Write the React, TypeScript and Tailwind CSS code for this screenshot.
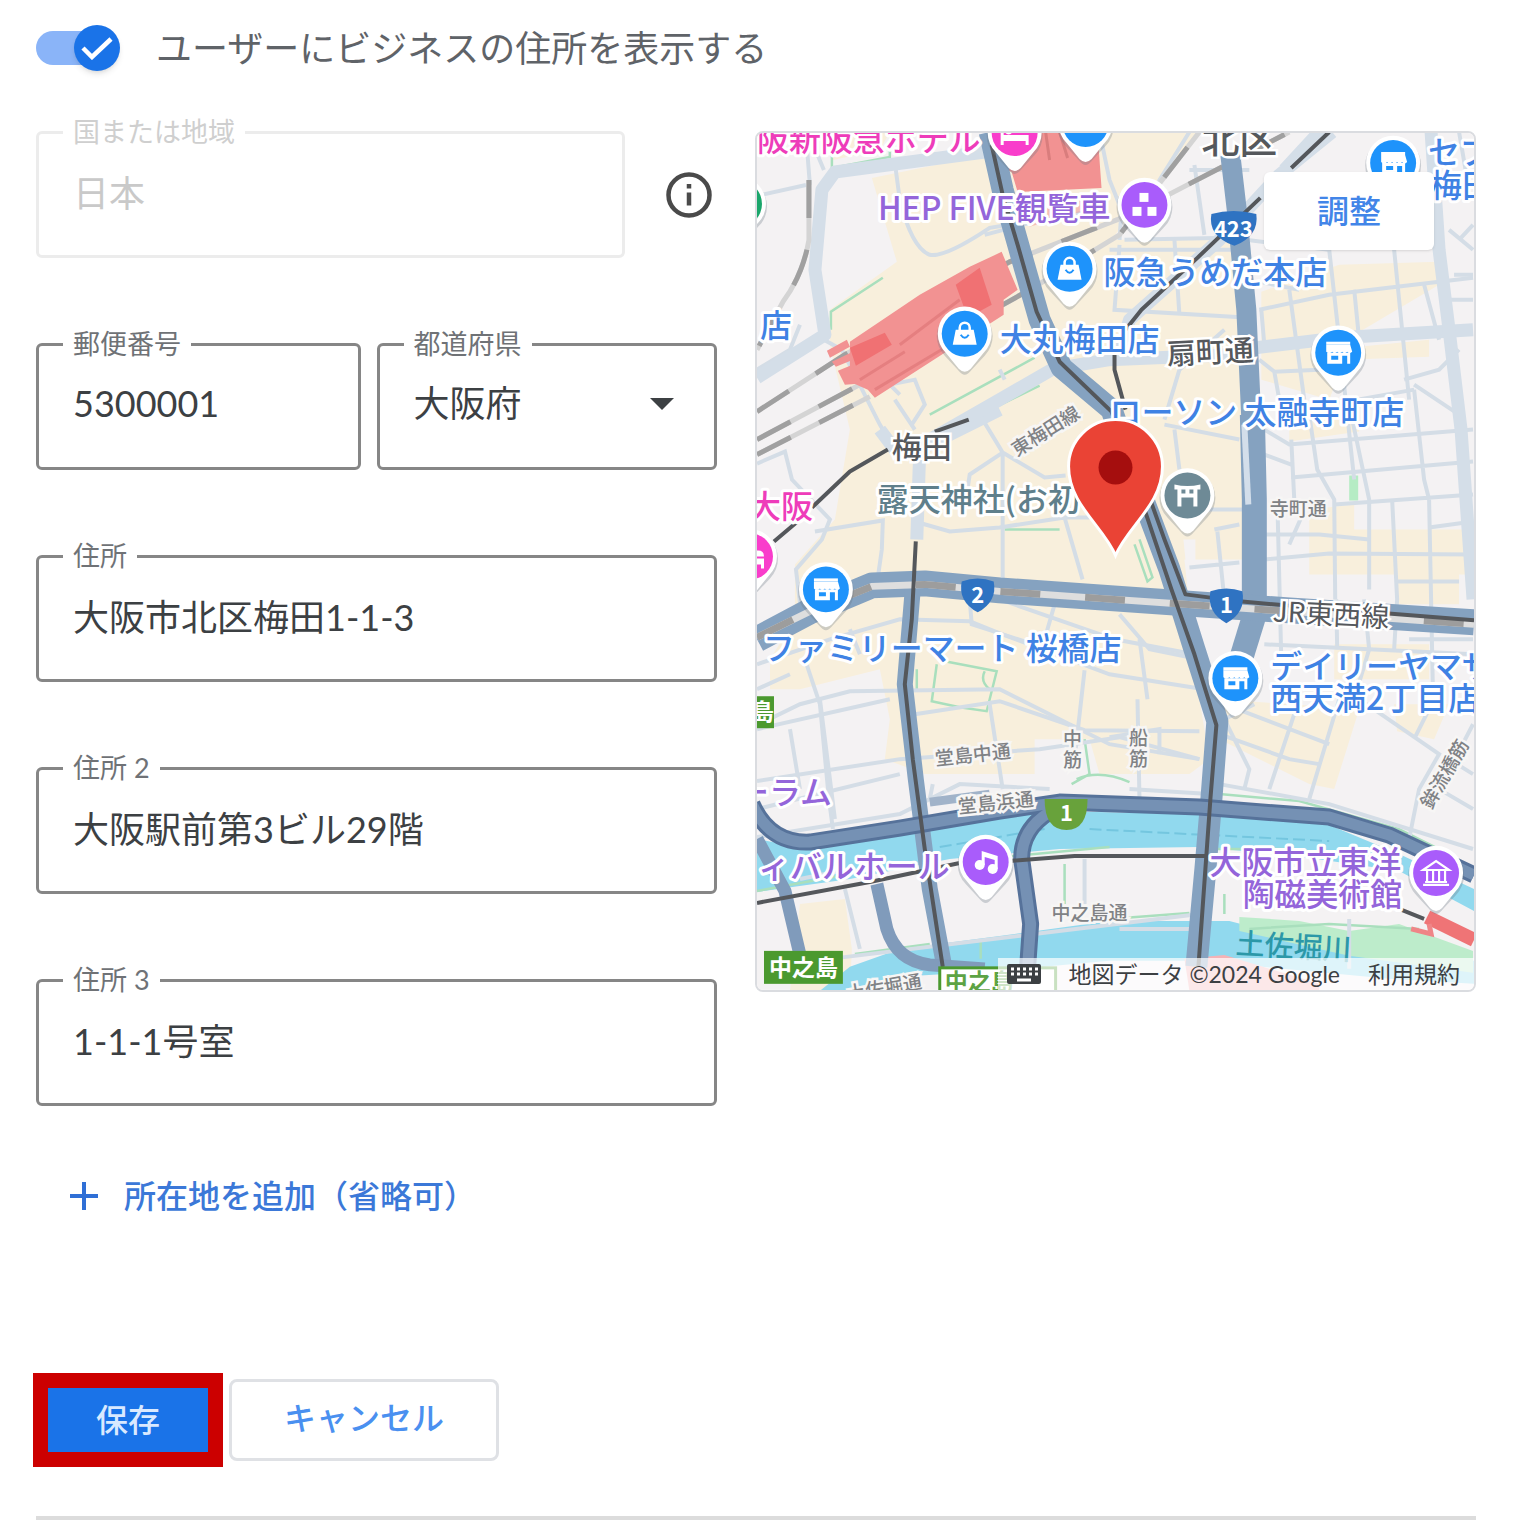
import React, { useState } from 'react';

const FONT = "font-[Lato,'Noto_Sans_CJK_JP',sans-serif]";

interface FieldProps {
  id: string;
  label: string;
  disabled?: boolean;
  className?: string;
  children: React.ReactNode;
}

const Field: React.FC<FieldProps> = ({ id, label, disabled, className = '', children }) => (
  <div
    className={`relative h-[127px] rounded-md border-[3px] ${
      disabled ? 'border-[#ececec]' : 'border-[#868686]'
    } ${className}`}
  >
    <label
      htmlFor={id}
      className={`absolute -top-5 left-6 bg-white px-[10px] text-[27px] leading-9 whitespace-nowrap ${
        disabled ? 'text-[#cfcfcf]' : 'text-[#6f7276]'
      }`}
    >
      {label}
    </label>
    {children}
  </div>
);

interface TextFieldProps {
  id: string;
  label: string;
  value: string;
  disabled?: boolean;
  className?: string;
}

const TextField: React.FC<TextFieldProps> = ({ id, label, value, disabled, className }) => (
  <Field id={id} label={label} disabled={disabled} className={className}>
    <input
      id={id}
      type="text"
      defaultValue={value}
      disabled={disabled}
      className="h-full w-full rounded-md bg-transparent px-[34px] pb-2 text-4xl text-[#3c4043] outline-none disabled:text-[#c9c9c9]"
    />
  </Field>
);

type PinIcon = 'store' | 'bag' | 'blocks' | 'bed' | 'torii' | 'music' | 'museum' | 'none';

const glyphs: Record<PinIcon, React.ReactNode> = {
  store: (
    <g fill="#fff">
      <path d="M-12-11h24v3h-24z" />
      <path d="M-12-8h24l2 7q-3 3-5 0q-3 3-5 0q-3 3-5 0q-3 3-5 0q-3 3-6 0z" />
      <path fillRule="evenodd" d="M-11 0h23v11h-3V3h-5v8h-15zM-7 3v4h7V3z" />
    </g>
  ),
  bag: (
    <g>
      <path d="M-5-3v-3a5 5 0 0 1 10 0v3" fill="none" stroke="#fff" strokeWidth="2.5" />
      <path d="M-9-4H9L12 11H-12z" fill="#fff" />
      <path d="M-4 1q4 6 8 0" fill="none" stroke="#1e93fb" strokeWidth="2" />
    </g>
  ),
  blocks: (
    <g fill="#fff">
      <rect x="-5" y="-12" width="9" height="9" />
      <rect x="-12" y="2" width="9" height="9" />
      <rect x="3" y="2" width="9" height="9" />
    </g>
  ),
  bed: (
    <g fill="#fff">
      <path d="M-14-8h3V2h25v10h-3V8h-22v4h-3z" />
      <path d="M-2-6H8q6 0 6 6H-2z" />
      <circle cx="-6" cy="-2" r="3.5" />
    </g>
  ),
  torii: (
    <path d="M-13-11q13 3 26 0v5h-3v17h-4V2h-12v9h-4V-6h-3zM-6-6v4h4v-4zM2-6v4h4v-4z" fill="#fff" fillRule="evenodd" />
  ),
  music: (
    <g fill="#fff">
      <circle cx="-6" cy="3" r="5" />
      <circle cx="7" cy="7" r="5" />
      <path d="M-4-11L12-6V7H9V-2L-1-5V3h-3z" />
    </g>
  ),
  museum: (
    <g fill="none" stroke="#fff" strokeWidth="2.2">
      <path d="M-13-3L0-12L13-3zM-13 12h26M-11 9h22M-9-3V9M-3-3V9M3-3V9M9-3V9" />
    </g>
  ),
  none: null,
};

const pins: { x: number; y: number; color: string; icon: PinIcon }[] = [
  { x: 1015, y: 133, color: '#f93dcb', icon: 'bed' },
  { x: 1086, y: 124, color: '#1e93fb', icon: 'none' },
  { x: 1145, y: 205, color: '#a95cfb', icon: 'blocks' },
  { x: 1070, y: 269, color: '#1e93fb', icon: 'bag' },
  { x: 965, y: 334, color: '#1e93fb', icon: 'bag' },
  { x: 1394, y: 163, color: '#1e93fb', icon: 'store' },
  { x: 1339, y: 353, color: '#1e93fb', icon: 'store' },
  { x: 1188, y: 496, color: '#6e8a96', icon: 'torii' },
  { x: 826, y: 590, color: '#1e93fb', icon: 'store' },
  { x: 1236, y: 679, color: '#1e93fb', icon: 'store' },
  { x: 750, y: 557, color: '#f93dcb', icon: 'bed' },
  { x: 739, y: 204, color: '#1aa66b', icon: 'none' },
  { x: 986, y: 863, color: '#a95cfb', icon: 'music' },
  { x: 1437, y: 874, color: '#a95cfb', icon: 'museum' },
];

const BLUE = '#3f82e4';
const PURPLE = '#9465da';
const PINK = '#ee3cba';

const places: { x: number; y: number; text: string; color: string; end?: boolean }[] = [
  { x: 757, y: 151, text: '阪新阪急ホテル', color: PINK },
  { x: 1111, y: 220, text: 'HEP FIVE観覧車', color: PURPLE, end: true },
  { x: 1104, y: 284, text: '阪急うめだ本店', color: BLUE },
  { x: 1000, y: 351, text: '大丸梅田店', color: BLUE },
  { x: 760, y: 337, text: '店', color: BLUE },
  { x: 1429, y: 164, text: 'セブン', color: BLUE },
  { x: 1431, y: 197, text: '梅田', color: BLUE },
  { x: 1110, y: 424, text: 'ローソン 太融寺町店', color: BLUE },
  { x: 877, y: 512, text: '露天神社(お初', color: '#5f7f8b' },
  { x: 749, y: 519, text: '大阪', color: PINK },
  { x: 763, y: 661, text: 'ファミリーマート 桜橋店', color: BLUE },
  { x: 1271, y: 679, text: 'デイリーヤマザ', color: BLUE },
  { x: 1271, y: 711, text: '西天満2丁目店', color: BLUE },
  { x: 832, y: 805, text: 'ーラム', color: PURPLE, end: true },
  { x: 950, y: 879, text: 'ィバルホール', color: PURPLE, end: true },
  { x: 1402, y: 875, text: '大阪市立東洋', color: PURPLE, end: true },
  { x: 1403, y: 907, text: '陶磁美術館', color: PURPLE, end: true },
];

const streets: { x: number; y: number; text: string; r: number }[] = [
  { x: 1045, y: 430, text: '東梅田線', r: -32 },
  { x: 1299, y: 508, text: '寺町通', r: 0 },
  { x: 973, y: 754, text: '堂島中通', r: -6 },
  { x: 996, y: 802, text: '堂島浜通', r: -6 },
  { x: 1090, y: 913, text: '中之島通', r: 0 },
  { x: 1444, y: 774, text: '鉾流橋筋', r: -60 },
  { x: 884, y: 987, text: '土佐堀通', r: -10 },
];

const minorRoads = [
  'M757 196L806 185M806 135L810 185M808 132L824 170',
  'M896 170L900 200Q912 248 930 255Q945 258 990 228L1100 210M985 235L1060 215',
  'M1100 132L1110 180L1122 210L1120 240',
  'M757 464L785 452L792 480L830 520L822 540L796 570L802 620',
  'M824 340L842 350L880 425L895 450M895 400L915 430M900 395L890 385L915 380L925 405L912 425',
  'M1000 370L1005 380M980 415L1003 453L1045 478L1066 476M1003 453L970 475L967 495M1003 453L1003 580',
  'M815 532L883 521L882 550L877 585M915 522L950 532L1000 528L1065 518L1083 580M1065 518H1120',
  'M757 665L830 640L900 620L970 622L1000 634L1110 675L1205 690M757 690L790 675',
  'M757 726L800 705L850 692L1000 690L1110 745L1200 760M805 660L820 705L829 800L833 830M850 630L860 655',
  'M1000 600L1115 640L1195 655M970 600L972 625L1065 655M1055 605L1045 640M1085 671L1075 760M1138 700L1140 800',
  'M757 730L890 700M915 715L1000 702L1085 731L1200 732M757 782L900 760L1040 750L1120 738L1200 760',
  'M790 730L800 790M820 700L835 820M757 838L900 815L960 785L1050 790M990 705L1003 790M933 785L930 800',
  'M757 810L900 775M1110 738L1160 730L1160 755M1140 640L1148 700M1120 615L1150 650L1200 660',
  'M1190 132L1160 180L1145 240M1190 170L1250 170M1195 165L1205 235M1125 240L1230 238L1330 250',
  'M1110 250H1245M1175 240L1180 315M1120 245L1115 310L1250 318M1165 420L1180 370L1225 330',
  'M1260 310L1330 295L1474 278M1260 282L1300 290M1290 290L1305 400M1330 250L1340 340L1355 480M1395 250L1410 400',
  'M1355 290L1360 340M1425 285L1440 340M1262 310L1265 345L1290 340M1260 360L1275 372L1320 370M1275 372L1280 400',
  'M1165 425L1240 440M1175 430L1180 470M1200 510H1245M1215 530L1240 525M1218 532L1225 600M1150 600L1230 595M1190 568L1240 563',
  'M1265 430L1290 445L1474 430M1265 455L1292 465M1292 440L1295 500M1310 415L1318 470L1335 500L1336 600M1352 415L1370 500V590',
  'M1292 478L1474 462M1335 505L1474 495M1415 390L1425 480L1430 500L1434 700M1265 535H1320L1370 540M1265 560L1330 554L1474 555',
  'M1278 500L1282 660M1393 500L1398 600L1395 650M1398 582H1460M1430 528L1474 522M1337 600L1338 650M1365 600L1370 650L1358 690',
  'M1290 545L1310 500M1405 380L1440 370L1460 350M1415 385L1460 415M1415 390L1330 405M1265 645L1474 655M1410 640H1474',
  'M1220 735L1290 760L1320 765M1225 705L1330 745M1300 700L1270 790M1340 700L1310 800M1255 705L1225 720L1250 770L1245 790',
  'M1360 700L1440 755L1420 790L1410 840M1435 700L1415 740M1450 760L1474 775M1440 790L1474 810M1474 725L1440 790',
  'M1220 785L1330 805L1474 850M1130 790L1210 795M1085 860V905M800 880L850 870M845 890L860 950M830 960L1200 915',
  'M1460 132L1470 190M1450 230L1474 250M1460 240L1474 225M1455 275H1474M1452 300H1474M1120 930H1200M1350 920L1350 970',
  'M757 370L790 350L800 325',
];

const midRoads = [
  'M757 378L825 335L815 270L822 190L835 172L985 152',
  'M1000 410L920 450L917 540M880 430L895 450',
  'M1050 370L1110 360L1230 355M1240 350L1340 338L1474 330M1066 362L1000 400L930 440',
  'M1333 132L1280 175L1220 240L1130 320L1118 360M1320 132L1285 170',
  'M1432 132L1440 250L1450 330L1462 430L1474 600',
];

const railways = [
  'M809 180L809 240Q803 275 783 302L757 350',
  'M757 412L845 355L1010 262L1130 215L1290 132',
  'M757 440L860 385L1030 290L1120 235L1200 132',
  'M757 455L870 397',
];

const CityMap = () => (
  <svg
    viewBox="757 133 718 858"
    className="block h-auto w-full"
    role="img"
    aria-label="大阪市北区梅田の地図"
    fontFamily="'Noto Sans CJK JP', sans-serif"
  >
    <rect x="757" y="133" width="718" height="858" fill="#f4f2f3" />

    {/* Commercial blocks */}
    <g fill="#f8efdc">
      <path d="M835 132H890L880 150L833 160zM872 178L985 155L990 132H1200L1150 190L1112 240H1240L1245 560H1185L1200 700L1210 760L1190 775H1100L1090 740H1035V775H925L885 760L890 720L880 670L800 690L770 690V660L795 620V565L835 520L850 430L830 345V310L897 262z" />
      <path d="M1262 292L1340 265L1440 262V285L1330 350L1430 340V357L1345 360L1330 400L1262 380zM1290 415H1360V432L1290 442zM1310 510L1355 505V530H1474V575H1460V605H1398V575H1310z" />
      <path d="M1220 700L1360 710L1335 790L1310 785L1220 740zM1395 705H1450L1435 740L1398 732zM1335 645H1430V680H1335zM800 905L845 900L852 950L850 992H790z" />
    </g>
    <path d="M1184 540H1196V570H1236V600H1190z" fill="#f4f2f3" />

    {/* Rivers */}
    <g fill="#91d9ee">
      <path d="M757 840L810 850L900 836L1045 812L1200 815L1330 826L1400 855L1475 890V912L1400 872L1290 856L1200 848L1060 850L950 860L850 880L757 893z" />
      <path d="M820 992L850 968L900 950L1000 937L1110 922H1230L1300 940L1475 962V985L1390 980L1200 962H1110L1000 972L900 978L865 992z" />
    </g>
    <path d="M940 848L1045 830M1090 830L1330 842" stroke="#74c6df" strokeWidth="2" strokeDasharray="12 5" fill="none" />

    {/* Parks */}
    <path d="M1240 918L1300 922L1350 932L1400 925L1474 952V974L1350 957L1240 932z" fill="#bdeccb" />
    <rect x="1350" y="476" width="9" height="25" fill="#b5ecc4" />
    <g fill="none" stroke="#a9dfbd" strokeWidth="2.5">
      <path d="M832 155V168L890 157V140M831 330V312L883 278M930 415L1035 358M960 425L1040 386M1005 530H1060" />
      <path d="M937 665L932 702L960 708L987 712L997 672L945 662M985 672Q980 682 990 690M917 670V690M1135 545L1148 582L1153 578L1140 540" />
      <path d="M1077 780Q1100 770 1130 783M1085 740L1090 775L1072 785M757 892L850 875M960 862L1110 848M1200 850H1290M1110 920L1190 914M855 955L930 945" />
      <path d="M1220 795L1300 802L1400 830L1440 850M1250 930L1330 925L1420 930M1225 895V915M981 940V960M1065 865V905" />
    </g>

    {/* Streets */}
    <g fill="none" stroke="#d4dde6" strokeWidth="4">
      {minorRoads.map((d) => (
        <path key={d} d={d} />
      ))}
    </g>
    <g fill="none" stroke="#d4dee8" strokeWidth="13" strokeLinejoin="round">
      {midRoads.map((d) => (
        <path key={d} d={d} />
      ))}
    </g>

    {/* Surface railways */}
    {railways.map((d) => (
      <g key={d} fill="none" strokeWidth="5">
        <path d={d} stroke="#d4d4d4" />
        <path d={d} stroke="#a0a0a0" strokeDasharray="38 32" />
      </g>
    ))}

    {/* Stations */}
    <g fill="#f29292">
      <path d="M850 342L920 295L970 267L1002 252L1018 290L1004 300L1004 315L875 398L868 390L850 382z" />
      <path d="M1008 132H1098L1102 188L1018 192L1012 172L1004 168z" />
      <path d="M1020 205L1095 195V208L1030 227z" opacity="0.5" />
      <path d="M827 351L847 340L850 347L830 358zM832 362L855 351L858 358L836 367zM838 371L860 362L858 384L845 385z" />
    </g>
    <path d="M956 285L980 268L992 305L968 318zM850 348L885 333L892 345L856 366z" fill="#f07173" />
    <path d="M860 380L905 352M875 390L950 345M900 345L960 300" stroke="#e57f80" strokeWidth="3" />
    <path d="M1046 132L1050 160M1060 132L1068 158" stroke="#d97d7d" strokeWidth="3" />
    <path d="M1185 960L1225 956L1320 985V992H1190z" fill="#f4b3b6" />

    {/* Main roads */}
    <g fill="none" stroke="#85a2c0" strokeLinejoin="round">
      <path d="M1231 155L1238 215L1247 310L1252 420" strokeWidth="20" />
      <path d="M1253 415L1255 500L1255 600" strokeWidth="25" />
      <path d="M1260 600L1240 665" strokeWidth="24" />
      <path d="M757 640L810 612L872 586L925 584L1000 591L1100 598L1200 605L1290 611L1475 623" strokeWidth="26" />
      <path d="M990 132L1003 190L1020 250L1040 320L1062 368L1112 410L1140 490L1170 570L1195 650L1218 722L1212 800L1206 870L1197 968" strokeWidth="22" />
      <path d="M913 590L905 685L916 780L930 890L945 970" strokeWidth="16" />
    </g>
    <path d="M1245 425L1249 505" stroke="#d3deea" strokeWidth="6" />
    <g fill="none" strokeWidth="7">
      <path d="M757 638L810 612L872 587L925 585L1000 592L1100 599L1200 606L1290 612L1475 625" stroke="#dedede" />
      <path d="M757 638L810 612L872 587L925 585L1000 592L1100 599L1200 606L1290 612L1475 625" stroke="#9d9d9d" strokeDasharray="40 45" />
    </g>

    {/* Expressway */}
    <g fill="none" strokeLinejoin="round">
      <g stroke="#56729a" strokeWidth="17">
        <path d="M752 805Q770 845 810 843L900 829L1000 812L1060 803L1200 808L1330 818L1390 836L1475 876" />
        <path d="M1050 813Q1022 830 1022 860L1031 925L1028 968" />
      </g>
      <g stroke="#7591b4" strokeWidth="11">
        <path d="M1050 813Q1022 830 1022 860L1031 925L1028 968" />
        <path d="M752 805Q770 845 810 843L900 829L1000 812L1060 803L1200 808L1330 818L1390 836L1475 876" />
      </g>
      <g stroke="#809bbb" strokeWidth="13">
        <path d="M877 885L887 930Q897 962 930 966L985 970" />
        <path d="M757 840L785 892L801 960" />
      </g>
      <path d="M930 803L990 795" stroke="#a1b3c9" strokeWidth="9" />
    </g>

    {/* Subway lines */}
    <g fill="none" stroke="#54575b" strokeWidth="4" strokeLinejoin="round">
      <path d="M992 145L1003 195L1018 245L1037 312L1060 362L1112 412L1145 510L1172 590L1195 655L1217 726L1211 800L1206 870L1199 968" />
      <path d="M1140 470L1165 540L1186 595L1240 602L1310 608L1475 621" />
      <path d="M916 542L912 620L905 685L913 760L925 850L943 968" />
      <path d="M1115 350V370L1126 410" />
      <path d="M1330 132L1292 168M1261 198L1198 258L1142 310L1126 330" />
      <path d="M969 420L935 432M888 450L850 472L812 508M800 520L774 542" />
      <path d="M757 904L870 883L960 864M1010 862L1075 857L1208 857M1400 910L1425 920" />
    </g>
    <path d="M1428 918L1475 941" stroke="#ef7476" strokeWidth="14" />
    <path d="M1412 930L1432 935L1430 925" stroke="#ef8587" strokeWidth="5" fill="none" />

    {/* Route shields */}
    <g fontSize="22" fontWeight="700" fill="#fff" textAnchor="middle">
      <path d="M1212 214Q1234 208 1257 214Q1260 236 1235 246Q1208 236 1212 214z" fill="#2f73c2" />
      <text x="1234" y="237">423</text>
      <path d="M962 582Q978 576 994 582Q998 602 978 613Q958 602 962 582z" fill="#2f73c2" />
      <text x="978" y="604">2</text>
      <path d="M1211 592Q1227 586 1243 592Q1247 613 1227 624Q1207 613 1211 592z" fill="#2f73c2" />
      <text x="1227" y="614">1</text>
      <path d="M1045 800H1088Q1088 831 1067 831Q1045 831 1045 800z" fill="#68a23b" />
      <text x="1067" y="822">1</text>
    </g>

    {/* Street names */}
    <g fontSize="19" fontWeight="500" fill="#808285" stroke="#f7f6f5" strokeWidth="5" paintOrder="stroke" textAnchor="middle" dominantBaseline="central">
      {streets.map((s) => (
        <text key={s.text} transform={`translate(${s.x} ${s.y}) rotate(${s.r})`}>
          {s.text}
        </text>
      ))}
      <text x="1073" y="738">中</text>
      <text x="1073" y="759">筋</text>
      <text x="1139" y="737">船</text>
      <text x="1139" y="758">筋</text>
    </g>
    <g fontWeight="500" fill="#55585c" stroke="#fff" strokeWidth="5" paintOrder="stroke">
      <text x="1202" y="153" fontSize="38">北区</text>
      <text x="1168" y="365" fontSize="29" transform="rotate(-3 1168 365)">扇町通</text>
      <text x="892" y="458" fontSize="30">梅田</text>
      <text x="1273" y="622" fontSize="28" fontWeight="400" transform="rotate(3 1273 622)">JR東西線</text>
      <text x="1236" y="955" fontSize="29" fill="#2c98a8" stroke="none" transform="rotate(3 1236 955)">土佐堀川</text>
    </g>

    {/* Place names */}
    <g fontSize="32" fontWeight="500" stroke="#fff" strokeWidth="6" strokeLinejoin="round" paintOrder="stroke">
      {places.map((p) => (
        <text key={p.text + p.y} x={p.x} y={p.y} fill={p.color} textAnchor={p.end ? 'end' : 'start'}>
          {p.text}
        </text>
      ))}
    </g>

    {/* Station signs */}
    <g fontSize="23" fontWeight="700">
      <rect x="764" y="952" width="79" height="33" fill="#4b992f" />
      <text x="769" y="977" fill="#fff">中之島</text>
      <rect x="740" y="697" width="34" height="32" fill="#4b992f" />
      <text x="774" y="721" fill="#fff" textAnchor="end">島</text>
      <rect x="940" y="969" width="116" height="30" fill="#fff" stroke="#4b992f" strokeWidth="3" />
      <text x="945" y="991" fill="#5da344">中之島</text>
    </g>

    {pins.map((p) => (
      <g key={`${p.x}-${p.y}`} transform={`translate(${p.x} ${p.y})`}>
        <path d="M0 41Q-3 41-7 36L-20 22A28 28 0 1 1 20 22L7 36Q3 41 0 41z" fill="#6b7785" opacity="0.3" />
        <path d="M0 38Q-3 38-6 35L-19 19A27 27 0 1 1 19 19L6 35Q3 38 0 38z" fill="#fff" />
        <circle r="23" fill={p.color} />
        {glyphs[p.icon]}
      </g>
    ))}

    {/* Business location */}
    <path
      d="M1116 556C1104 527 1069 505 1069 467A47 47 0 0 1 1163 467C1163 505 1128 527 1116 556z"
      fill="#ea4335"
      stroke="#fff"
      strokeWidth="3"
    />
    <circle cx="1116" cy="468" r="17" fill="#a50e0e" />
  </svg>
);

const KeyboardIcon = () => (
  <svg viewBox="0 0 34 20" className="h-5 w-[34px]" aria-hidden="true">
    <rect width="34" height="20" rx="2" fill="#3c4043" />
    <path d="M4 5h27M4 10h27" stroke="#fff" strokeWidth="3" strokeDasharray="3 3" />
    <path d="M10 16h14" stroke="#fff" strokeWidth="3" />
  </svg>
);

export default function App() {
  const [visible, setVisible] = useState(true);

  return (
    <main className={`min-h-screen bg-white pt-[22px] ${FONT}`}>
      <div className="pr-11 pl-9">
        <label className="flex h-[52px] items-center gap-9 text-4xl text-[#5f6368]">
          <span className="relative flex h-[46px] w-[84px] shrink-0 items-center">
            <input
              type="checkbox"
              role="switch"
              checked={visible}
              onChange={(e) => setVisible(e.target.checked)}
              className="peer absolute inset-0 opacity-0"
            />
            <span className="h-[34px] w-[70px] rounded-full bg-[#bdc1c6] peer-checked:bg-[#8ab4f8]" />
            <span className="absolute left-0 flex size-[46px] items-center justify-center rounded-full bg-white shadow-md peer-checked:right-0 peer-checked:left-auto peer-checked:bg-[#1a73e8]">
              <svg viewBox="0 0 32 24" className="h-6 w-8" aria-hidden="true">
                <path d="M2 12L11 21L30 3" fill="none" stroke="#fff" strokeWidth="4.5" />
              </svg>
            </span>
          </span>
          ユーザーにビジネスの住所を表示する
        </label>

        <div className="mt-[57px] grid grid-cols-[17fr_18fr] items-start gap-[38px]">
          <form id="address-form">
            <div className="flex flex-col gap-[85px]">
              <div className="flex items-center gap-9">
                <TextField id="country" label="国または地域" value="日本" disabled className="flex-1" />
                <button type="button" aria-label="詳細" className="flex w-14 justify-center">
                  <svg viewBox="0 0 48 48" className="size-12" aria-hidden="true">
                    <circle cx="24" cy="24" r="20.5" fill="none" stroke="#4a4a4a" strokeWidth="4.5" />
                    <path d="M24 21.5v13M24 13v4.5" stroke="#4a4a4a" strokeWidth="4.5" />
                  </svg>
                </button>
              </div>

              <div className="flex gap-4">
                <TextField id="postal" label="郵便番号" value="5300001" className="min-w-0 flex-[20]" />
                <Field id="prefecture" label="都道府県" className="min-w-0 flex-[21]">
                  <select
                    id="prefecture"
                    defaultValue="大阪府"
                    className="h-full w-full appearance-none rounded-md bg-transparent px-[34px] pb-2 text-4xl text-[#3c4043] outline-none"
                  >
                    <option>大阪府</option>
                  </select>
                  <svg
                    viewBox="0 0 24 12"
                    className="pointer-events-none absolute top-[52px] right-10 h-3 w-6"
                    aria-hidden="true"
                  >
                    <path d="M0 0H24L12 12z" fill="#3c4043" />
                  </svg>
                </Field>
              </div>

              <TextField id="address1" label="住所" value="大阪市北区梅田1-1-3" />
              <TextField id="address2" label="住所 2" value="大阪駅前第3ビル29階" />
              <TextField id="address3" label="住所 3" value="1-1-1号室" />
            </div>

            <button
              type="button"
              className="mt-[66px] flex h-12 items-center gap-[26px] pl-[34px] text-[32px] font-medium whitespace-nowrap text-[#3b78d8]"
            >
              <svg viewBox="0 0 28 28" className="size-7" aria-hidden="true">
                <path d="M14 0V28M0 14H28" stroke="#2f6fd6" strokeWidth="4" />
              </svg>
              所在地を追加（省略可）
            </button>
          </form>

          <div className="relative overflow-hidden rounded-lg border-2 border-[#dadce0]">
            <CityMap />
            <button
              type="button"
              className="absolute top-[39px] right-10 h-[78px] w-[170px] rounded-md bg-white text-[32px] font-medium text-[#4285e8] shadow"
            >
              調整
            </button>
            <div className="absolute right-0 bottom-0 flex h-8 items-center bg-white/70 pr-[14px] pl-[9px] text-[23px] whitespace-nowrap text-[#3c4043]">
              <KeyboardIcon />
              <span className="ml-7">地図データ ©2024 Google</span>
              <a href="#terms" className="ml-7">
                利用規約
              </a>
            </div>
          </div>
        </div>
      </div>

      <div className="mt-[153px] flex items-center gap-1.5 pl-[33px]">
        <button
          type="submit"
          form="address-form"
          className="h-[94px] w-[190px] border-[15px] border-[#cc0000] bg-[#1a73e8] text-[32px] font-medium text-[#d9e9ff]"
        >
          保存
        </button>
        <button
          type="button"
          className="h-[82px] w-[270px] rounded-lg border-[3px] border-[#dfe1e5] bg-white pb-1 text-[32px] font-medium text-[#4a90f0]"
        >
          キャンセル
        </button>
      </div>

      <hr className="mt-[49px] mr-11 ml-9 border-t-4 border-[#dcdcdc]" />
    </main>
  );
}
